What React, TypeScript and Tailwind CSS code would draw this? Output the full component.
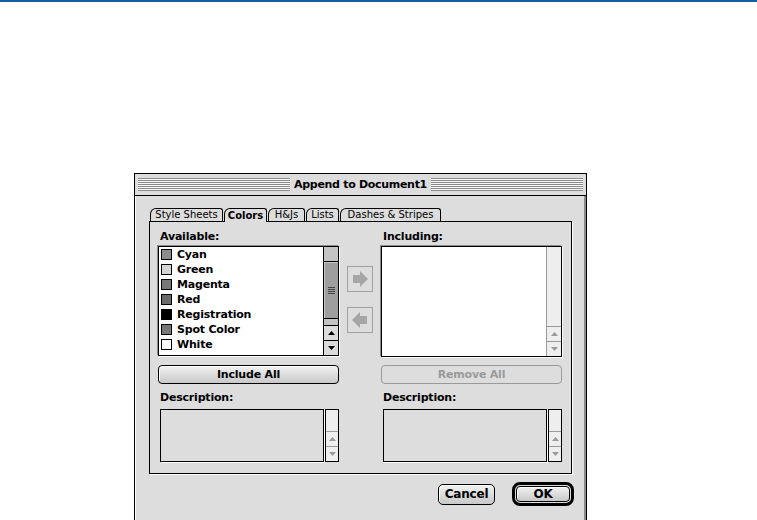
import React from 'react';

const bold = "font-['DejaVu_Sans',sans-serif] font-bold text-[11px] leading-[14px] tracking-[-0.2px]";

const swatches = [
    { name: 'Cyan', color: 'bg-[#8c8c8c]' },
    { name: 'Green', color: 'bg-[#d4d4d4]' },
    { name: 'Magenta', color: 'bg-[#777777]' },
    { name: 'Red', color: 'bg-[#6a6a6a]' },
    { name: 'Registration', color: 'bg-black' },
    { name: 'Spot Color', color: 'bg-[#777777]' },
    { name: 'White', color: 'bg-white' },
];

const tabs = [
    { label: 'Style Sheets', w: 'w-[73px]' },
    { label: 'Colors', w: 'w-[43px]', active: true },
    { label: 'H&Js', w: 'w-[37px]' },
    { label: 'Lists', w: 'w-[33px]' },
    { label: 'Dashes & Stripes', w: 'w-[101px]' },
];

const Stripes = () => (
    <div className="flex-1 h-[13px] bg-[repeating-linear-gradient(to_bottom,#8c8c8c_0px,#8c8c8c_1px,#f6f6f6_1px,#f6f6f6_2px)] border-b border-[#8c8c8c]" />
);

const Tri = ({ up, dim }: { up?: boolean; dim?: boolean }) => (
    <svg width="7" height="4" viewBox="0 0 7 4">
        <polygon points={up ? '3.5,0 7,4 0,4' : '0,0 7,0 3.5,4'} fill={dim ? '#9a9a9a' : '#000'} />
    </svg>
);

const ArrowBox = ({ up, dim }: { up?: boolean; dim?: boolean }) => (
    <div className={`h-[15px] flex items-center justify-center border-t ${dim ? 'border-[#9a9a9a] bg-[#eeeeee]' : 'border-black bg-[#dcdcdc]'}`}>
        <Tri up={up} dim={dim} />
    </div>
);

const MoveButton = ({ left }: { left?: boolean }) => (
    <div className="w-[26px] h-[26px] border border-[#a0a0a0] bg-[#dddddd] flex items-center justify-center">
        <svg width="16" height="16" viewBox="0 0 16 16">
            {left ? (
                <polygon points="0,8 8,0 8,4 15,4 15,12 8,12 8,16" fill="#a6a6a6" />
            ) : (
                <polygon points="16,8 8,0 8,4 1,4 1,12 8,12 8,16" fill="#a6a6a6" />
            )}
        </svg>
    </div>
);

const DescBox = () => (
    <div className="flex mt-[4px] ml-[2px] h-[53px]">
        <div className="flex-1 border border-black bg-[#dddddd] shadow-[1px_1px_0_#ffffff]" />
        <div className="w-[14px] ml-[1px] border border-black bg-[#eeeeee] flex flex-col">
            <div className="flex-1" />
            <ArrowBox up dim />
            <ArrowBox dim />
        </div>
    </div>
);

export default function App() {
    return (
        <div className="w-[757px] h-[520px] bg-white overflow-hidden">
            <div className="h-[2px] bg-[#1a5e9e]" />
            <div className="ml-[134px] mt-[171px] w-[453px] h-[350px] border border-black bg-[#dddddd] shadow-[inset_1px_0_0_#ffffff,inset_-2px_0_0_#8c8c8c] flex flex-col">
                {/* Title bar */}
                <div className="h-[22px] border-b border-black flex items-center px-[3px] bg-[#dddddd]">
                    <Stripes />
                    <span className="font-['DejaVu_Sans',sans-serif] font-bold text-[11px] leading-[14px] tracking-[-0.3px] px-[4px] text-black">Append to Document1</span>
                    <Stripes />
                </div>

                {/* Tabs */}
                <div className="flex items-end ml-[15px] mt-[12px] h-[13px]">
                    {tabs.map((t) => (
                        <div
                            key={t.label}
                            className={`${t.w} h-[13px] mr-[1px] border-t border-l border-r border-black rounded-tl-[6px] rounded-tr-[3px] flex items-center justify-center font-['DejaVu_Sans',sans-serif] text-[10px] leading-[12px] text-black ${t.active ? 'font-bold h-[14px] -mb-[1px] relative z-10 bg-[#dddddd]' : 'bg-[#dddddd]'}`}
                        >
                            {t.label}
                        </div>
                    ))}
                </div>

                {/* Panel */}
                <div className="ml-[14px] w-[423px] h-[253px] border border-black shadow-[1px_1px_0_#ffffff] flex pl-[8px] pr-[9px]">
                    {/* Available column */}
                    <div className="w-[181px] flex flex-col">
                        <div className={`${bold} pt-[8px] h-[24px] pl-[2px]`}>Available:</div>
                        <div className="h-[110px] border border-black bg-white flex shadow-[-1px_-1px_0_#8c8c8c,1px_1px_0_#ffffff]">
                            <div className="flex-1 flex flex-col">
                                {swatches.map((s) => (
                                    <div key={s.name} className="h-[15px] flex items-center pl-[2px]">
                                        <div className={`w-[11px] h-[11px] border border-black ${s.color} mr-[5px]`} />
                                        <span className={bold}>{s.name}</span>
                                    </div>
                                ))}
                            </div>
                            <div className="w-[15px] border-l border-black flex flex-col bg-[#c4c4c4]">
                                <div className="h-[14px]" />
                                <div className="h-[58px] border-y border-black bg-[#9e9e9e] flex flex-col items-center justify-center gap-[1px] shadow-[inset_1px_1px_0_#c8c8c8]">
                                    <div className="w-[7px] h-[1px] bg-[#444]" />
                                    <div className="w-[7px] h-[1px] bg-[#444]" />
                                    <div className="w-[7px] h-[1px] bg-[#444]" />
                                    <div className="w-[7px] h-[1px] bg-[#444]" />
                                </div>
                                <div className="flex-1" />
                                <ArrowBox up />
                                <ArrowBox />
                            </div>
                        </div>
                        <div className={`mt-[9px] h-[19px] border border-black rounded-[4px] bg-[linear-gradient(#f2f2f2,#c8c8c8)] shadow-[inset_1px_1px_0_#ffffff] flex items-center justify-center ${bold}`}>
                            Include All
                        </div>
                        <div className={`${bold} mt-[7px] pl-[2px]`}>Description:</div>
                        <DescBox />
                    </div>

                    {/* Move buttons */}
                    <div className="w-[26px] mx-[8px] flex flex-col pt-[44px] gap-[15px]">
                        <MoveButton />
                        <MoveButton left />
                    </div>

                    {/* Including column */}
                    <div className="w-[181px] flex flex-col">
                        <div className={`${bold} pt-[8px] h-[24px] pl-[2px]`}>Including:</div>
                        <div className="h-[111px] border border-black bg-white flex shadow-[-1px_-1px_0_#8c8c8c,1px_1px_0_#ffffff]">
                            <div className="flex-1" />
                            <div className="w-[15px] border-l border-[#9a9a9a] flex flex-col bg-[#eeeeee]">
                                <div className="flex-1" />
                                <ArrowBox up dim />
                                <ArrowBox dim />
                            </div>
                        </div>
                        <div className={`mt-[8px] h-[19px] border border-[#9a9a9a] rounded-[4px] bg-[#dddddd] flex items-center justify-center ${bold} text-[#9a9a9a]`}>
                            Remove All
                        </div>
                        <div className={`${bold} mt-[7px] pl-[2px]`}>Description:</div>
                        <DescBox />
                    </div>
                </div>

                {/* Bottom buttons */}
                <div className="flex justify-end items-center mt-[8px] pr-[12px] gap-[17px]">
                    <div className={`w-[57px] h-[21px] border border-black rounded-[5px] bg-[linear-gradient(#f2f2f2,#c8c8c8)] shadow-[inset_1px_1px_0_#ffffff] flex items-center justify-center ${bold} text-[12px]`}>
                        Cancel
                    </div>
                    <div className="w-[62px] h-[24px] border-[3px] border-black rounded-[8px] p-[1px] bg-[#dddddd]">
                        <div className={`w-full h-full border border-black rounded-[4px] bg-[linear-gradient(#f2f2f2,#c8c8c8)] shadow-[inset_1px_1px_0_#ffffff] flex items-center justify-center ${bold} text-[12px]`}>
                            OK
                        </div>
                    </div>
                </div>
            </div>
        </div>
    );
}
